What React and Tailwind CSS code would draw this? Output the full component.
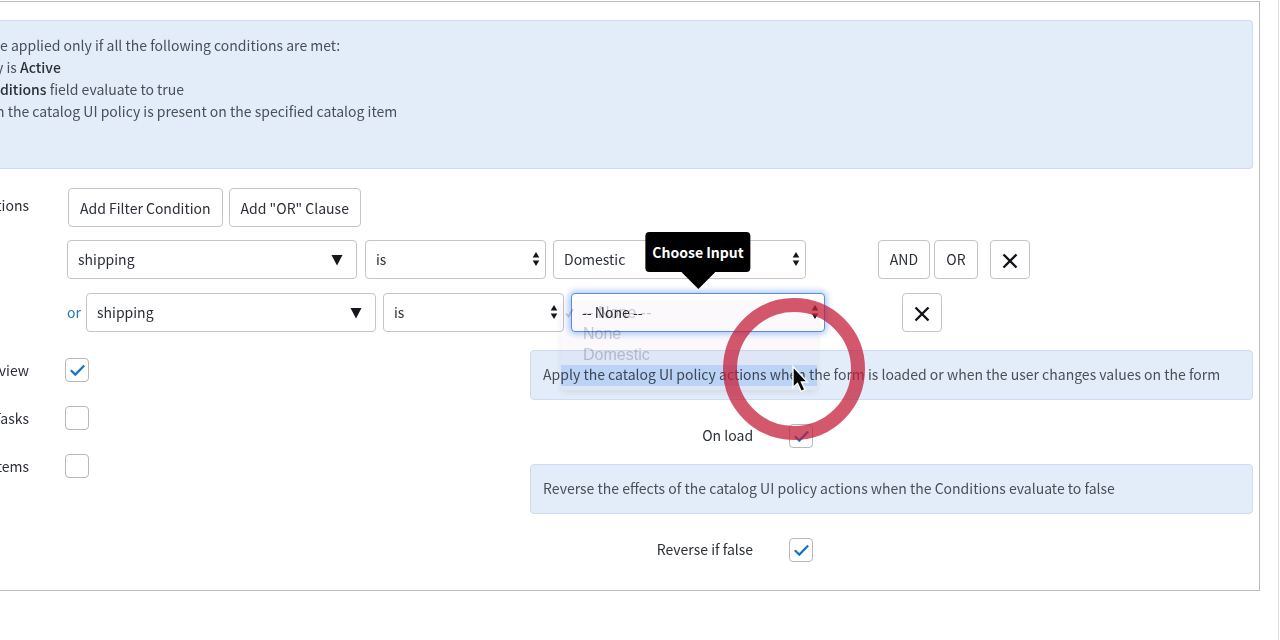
import React, { useState } from 'react';

function InfoBox({ children, className = '' }) {
  return (
    <div className={`bg-[#e3edf9] border border-[#cbddf2] text-[#4a4f57] ${className}`}>
      {children}
    </div>
  );
}

function ActionButton({ children, className = '', ...props }) {
  return (
    <button type="button" className={`h-[39px] shrink-0 flex items-center justify-center rounded border border-[#c4c4c6] bg-white hover:bg-gray-50 ${className}`} {...props}>
      {children}
    </button>
  );
}

function RemoveButton() {
  return (
    <ActionButton className="w-10 pt-0.5" aria-label="Remove condition">
      <svg width="16" height="16" viewBox="0 0 16 16" fill="none" stroke="#111318" strokeWidth="2.4">
        <path d="M1.5 1.5 14.5 14.5M14.5 1.5 1.5 14.5" />
      </svg>
    </ActionButton>
  );
}

function SelectBox({ label, options, defaultValue, className = '', wide, focused, children }) {
  return (
    <div className={`relative shrink-0 ${className}`}>
      <select
        aria-label={label}
        defaultValue={defaultValue}
        className={`block appearance-none w-full h-[39px] rounded border bg-white pl-2.5 pb-0.5 outline-none ${focused ? 'border-[#5a8fe0] shadow-[0_0_6px_2px_#a9c8f8]' : 'border-[#c4c4c6]'}`}
      >
        {options.map(option => <option key={option}>{option}</option>)}
      </select>
      {wide ? (
        <svg className="absolute right-3.5 top-3.5 pointer-events-none" width="12" height="12" viewBox="0 0 12 12" fill="#15171c">
          <path d="M0.5 1H11.5L6 11.5Z" />
        </svg>
      ) : (
        <svg className="absolute right-1.5 top-3 pointer-events-none" width="8" height="14" viewBox="0 0 8 14" fill="#15171c">
          <path d="M4 0 7.3 5.4H0.7ZM4 14 7.3 8.6H0.7Z" />
        </svg>
      )}
      {children}
    </div>
  );
}

function CheckBox({ id, checked, onChange }) {
  return (
    <span className="relative block size-6 shrink-0">
      <input id={id} type="checkbox" checked={checked} onChange={onChange} className="block appearance-none size-6 rounded border border-[#b8b8ba] bg-white" />
      {checked && (
        <svg className="absolute inset-0 pointer-events-none" width="24" height="24" viewBox="0 0 24 24" fill="none" stroke="#1574c4" strokeWidth="2.2">
          <path d="M5.8 12.2 10.3 16.6 19.2 7.6" />
        </svg>
      )}
    </span>
  );
}

// Pop-up list in the middle of fading out after a choice
function FadingMenu() {
  return (
    <ul className="absolute -left-2.5 top-2 w-64 pb-1 pt-px rounded-sm bg-[#fbf9fc] mix-blend-multiply shadow-[0_3px_6px_rgba(0,0,0,0.08)] font-['Liberation_Sans',sans-serif] text-base leading-[21px] text-[#c9c7d0] pointer-events-none">
      <li className="relative pl-5.5">
        <svg className="absolute left-1 top-1.5" width="9" height="10" viewBox="0 0 9 10" fill="none" stroke="currentColor" strokeWidth="1.6">
          <path d="M1 5.5 3.5 8.5 8 1" />
        </svg>
        -- None --
      </li>
      <li className="pl-5.5">None</li>
      <li className="pl-5.5">Domestic</li>
      <li className="h-[21px] bg-[#d2e3fb]"></li>
    </ul>
  );
}

function Tooltip({ text }) {
  return (
    <div role="tooltip" className="absolute bottom-full left-1/2 -translate-x-1/2 mb-[21px] h-10 px-[7px] flex items-center rounded-sm bg-black text-white font-bold whitespace-nowrap">
      {text}
      <svg className="absolute left-1/2 top-full -translate-x-1/2" width="34" height="17" viewBox="0 0 34 17">
        <path d="M0 0H34L17 17Z" />
      </svg>
    </div>
  );
}

function ClickPointer() {
  return (
    <svg className="absolute z-10 left-[152px] top-[5px] pointer-events-none" width="142" height="142" viewBox="0 0 142 142">
      <circle cx="71" cy="71" r="64" fill="none" stroke="#c41e38" strokeOpacity="0.74" strokeWidth="14" />
      <path d="M70 68.5V89.5L74.5 85.5 78.2 93.5 82 91.7 78.4 84H84.5Z" fill="#0b0b0b" stroke="#fff" strokeWidth="1.4" />
    </svg>
  );
}

export default function App() {
  const [flags, setFlags] = useState({ view: true, tasks: false, items: false, onLoad: true, reverse: true });

  const toggle = (name) => () => setFlags(prev => ({ ...prev, [name]: !prev[name] }));

  const leftFlags = [
    { name: 'view', label: 'view' },
    { name: 'tasks', label: 'Tasks' },
    { name: 'items', label: 'tems' }
  ];
  const choices = ['-- None --', 'None', 'Domestic'];

  return (
    <div className="min-h-screen bg-white overflow-hidden font-['Noto_Sans_CJK_SC',sans-serif] text-sm leading-[22px] text-[#2b2f36]">
      <main className="min-h-screen mr-px border-r border-[#dedee0] pt-px pr-[18px]">
        <section className="border-y border-r border-[#bdbdbf] pt-[18px] pr-1.5 pb-7">
          <InfoBox className="border-l-0 rounded-r pt-[13px] pb-[46px]">
            <p>e applied only if all the following conditions are met:</p>
            <p className="-ml-1">y is <span className="font-medium text-[#2b2f36]">Active</span></p>
            <p><span className="font-medium text-[#2b2f36]">ditions</span> field evaluate to true</p>
            <p className="-ml-1">n the catalog UI policy is present on the specified catalog item</p>
          </InfoBox>

          <div className="flex pt-[19px]">
            <div className="w-[29px] shrink-0 flex justify-end pt-1.5">tions</div>
            <div className="pl-[38px]">
              <div className="flex gap-1.5 pl-px">
                <ActionButton className="px-[11px]">Add Filter Condition</ActionButton>
                <ActionButton className="px-[11px]">Add "OR" Clause</ActionButton>
              </div>

              <div className="flex pt-[13px]">
                <SelectBox wide label="Field" options={['shipping']} className="w-[290px]" />
                <SelectBox label="Operator" options={['is']} className="w-[181px] ml-2" />
                <SelectBox label="Value" options={choices} defaultValue="Domestic" className="w-[253px] ml-[7px]" />
                <div className="flex pl-[72px]">
                  <ActionButton className="w-[52px] pb-0.5">AND</ActionButton>
                  <ActionButton className="w-11 ml-1 pb-0.5">OR</ActionButton>
                  <div className="pl-3"><RemoveButton /></div>
                </div>
              </div>

              <div className="flex pt-3.5">
                <span className="w-[19px] pt-2 text-[#1f78c1]">or</span>
                <SelectBox wide label="Field" options={['shipping']} className="w-[290px]" />
                <SelectBox label="Operator" options={['is']} className="w-[181px] ml-[7px]" />
                <SelectBox focused label="Choose Input" options={choices} defaultValue="-- None --" className="w-[254px] ml-[7px]">
                  <FadingMenu />
                  <Tooltip text="Choose Input" />
                  <ClickPointer />
                </SelectBox>
                <div className="pl-[77px]"><RemoveButton /></div>
              </div>
            </div>
          </div>

          <div className="grid grid-cols-[11fr_15fr] pt-[18px]">
            <div className="flex flex-col gap-6 pt-2">
              {leftFlags.map(flag => (
                <div key={flag.name} className="flex items-center gap-9">
                  <label htmlFor={flag.name} className="w-[29px] flex justify-end">{flag.label}</label>
                  <CheckBox id={flag.name} checked={flags[flag.name]} onChange={toggle(flag.name)} />
                </div>
              ))}
            </div>

            <div>
              <InfoBox className="rounded px-3 pt-3 pb-3.5">
                Apply the catalog UI policy actions when the form is loaded or when the user changes values on the form
              </InfoBox>
              <div className="flex items-center gap-9 pt-6 pb-4">
                <label htmlFor="onLoad" className="w-[223px] pb-0.5 text-right">On load</label>
                <CheckBox id="onLoad" checked={flags.onLoad} onChange={toggle('onLoad')} />
              </div>
              <InfoBox className="rounded px-3 pt-3 pb-3.5">
                Reverse the effects of the catalog UI policy actions when the Conditions evaluate to false
              </InfoBox>
              <div className="flex items-center gap-9 pt-6">
                <label htmlFor="reverse" className="w-[223px] pb-0.5 text-right">Reverse if false</label>
                <CheckBox id="reverse" checked={flags.reverse} onChange={toggle('reverse')} />
              </div>
            </div>
          </div>
        </section>
      </main>
    </div>
  );
}
